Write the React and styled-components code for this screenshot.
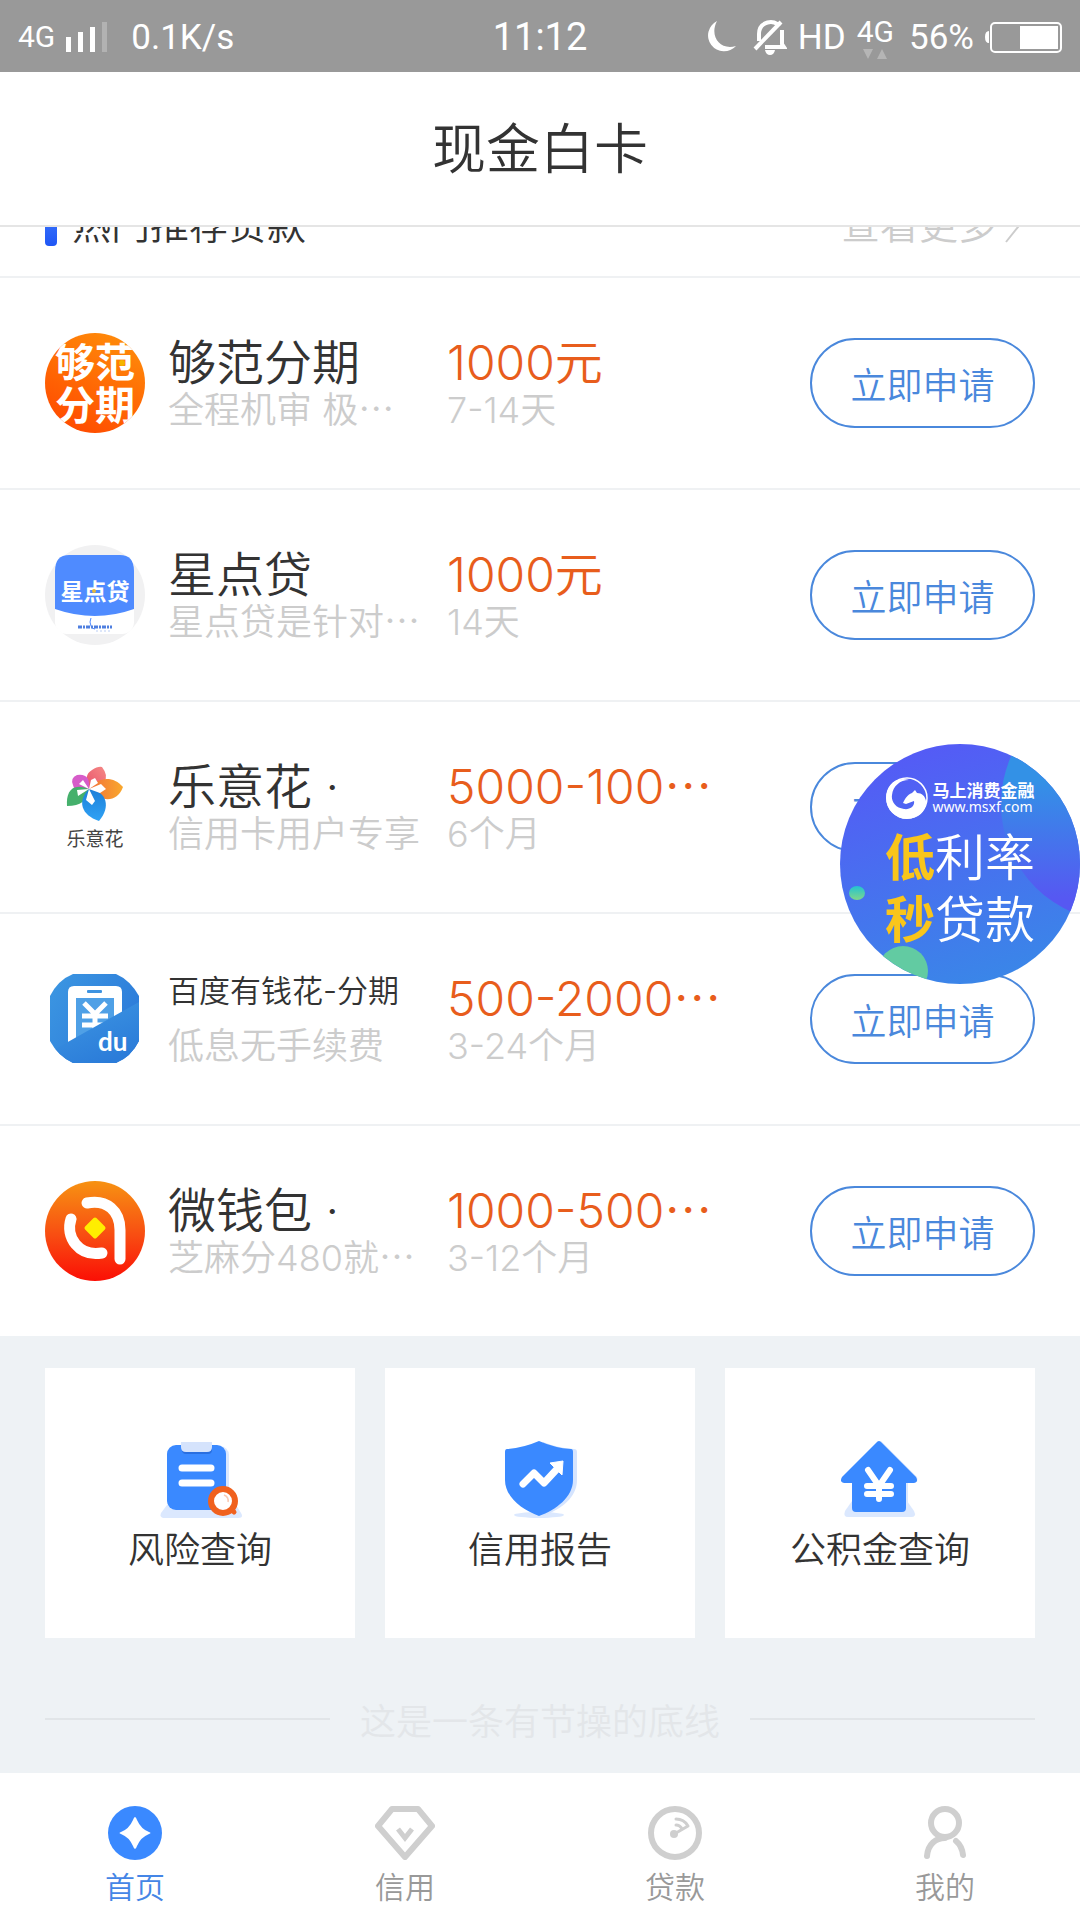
import React from "react";
import styled, { createGlobalStyle } from "styled-components";

const GlobalStyle = createGlobalStyle`
  *, *::before, *::after { box-sizing: border-box; }
  body {
    margin: 0;
    background: #eef2f5;
    color: #333;
    font-family: Inter, "Noto Sans CJK SC", sans-serif;
    font-weight: 350;
  }
  h1, h2, h3, p, ul { margin: 0; padding: 0; font-weight: inherit; }
  a { color: inherit; text-decoration: none; }
  svg { display: block; flex: none; }
`;

const Page = styled.div`
  position: relative;
  display: flex;
  flex-direction: column;
  height: 100vh;
  overflow: hidden;
`;

const StatusBar = styled.div`
  flex: none;
  display: grid;
  grid-template-columns: 1fr auto 1fr;
  align-items: center;
  height: 72px;
  padding: 2px 18px 0;
  background: #999;
  color: #fff;
  font-family: Roboto, sans-serif;
  font-weight: 400;
  font-size: 35px;
`;

const StatusGroup = styled.div`
  display: flex;
  align-items: center;
  justify-content: ${(p) => p.$justify || "flex-start"};
  gap: ${(p) => p.$gap}px;
`;

const Network = styled.span`
  font-size: 30px;
  line-height: 34px;
`;

const NetworkStack = styled.div`
  display: flex;
  flex-direction: column;
  align-items: center;
  padding-right: 4px;
`;

const Speed = styled.span`
  padding-left: 12px;
`;

const Clock = styled.time`
  font-size: 38px;
`;

const TitleBar = styled.header`
  flex: none;
  display: flex;
  align-items: center;
  justify-content: center;
  height: 155px;
  padding-top: 2px;
  border-bottom: 2px solid #e5e5e5;
  background: #fff;
`;

const Title = styled.h1`
  font-size: 54px;
  line-height: 80px;
`;

const Content = styled.main`
  flex: 1;
  min-height: 0;
  display: flex;
  flex-direction: column;
  justify-content: flex-end;
  overflow: hidden;
`;

const Section = styled.section`
  flex: none;
  background: #fff;
`;

const SectionHead = styled.div`
  display: flex;
  align-items: center;
  gap: 15px;
  height: 108px;
  padding: 0 57px 0 45px;
  font-size: 39px;
`;

const Marker = styled.span`
  width: 12px;
  height: 48px;
  border-radius: 4px;
  background: linear-gradient(#4a86ff, #1f56f5);
`;

const SectionTitle = styled.h2`
  flex: 1;
  font-size: 39px;
`;

const MoreLink = styled.a`
  display: flex;
  align-items: center;
  gap: 8px;
  color: #ccc;
`;

const LoanList = styled.ul`
  list-style: none;
`;

const LoanRow = styled.li`
  display: flex;
  align-items: center;
  height: 212px;
  padding: 0 45px;
  border-top: 2px solid #eff1f3;
`;

const Info = styled.div`
  flex: none;
  width: ${(p) => p.$width}px;
  margin-left: ${(p) => p.$gap}px;
  white-space: nowrap;
`;

const Name = styled.h3`
  height: 54px;
  font-size: ${(p) => (p.$long ? 31 : 48)}px;
  line-height: ${(p) => (p.$long ? 38 : 54)}px;
`;

const Amount = styled.p`
  font-size: 48px;
  line-height: 54px;
  color: #e85d1c;
`;

const Note = styled.p`
  font-size: 36px;
  line-height: 40px;
  color: #ccc;
`;

const ApplyButton = styled.button`
  width: 225px;
  height: 90px;
  margin-left: auto;
  padding: 0;
  border: 2px solid #4a88dc;
  border-radius: 45px;
  background: #fff;
  color: #4a88dc;
  font: inherit;
  font-size: 36px;
`;

const Tools = styled.section`
  flex: none;
  display: grid;
  grid-template-columns: repeat(3, 1fr);
  gap: 30px;
  padding: 32px 45px 0;
`;

const ToolCard = styled.a`
  display: flex;
  flex-direction: column;
  align-items: center;
  justify-content: center;
  gap: 6px;
  height: 270px;
  padding-top: 4px;
  background: #fff;
  font-size: 36px;
  line-height: 50px;
`;

const EndLine = styled.p`
  flex: none;
  display: flex;
  align-items: center;
  gap: 30px;
  height: 135px;
  padding: 26px 45px 0;
  color: #e3e6e9;
  font-size: 36px;
  &::before, &::after {
    content: "";
    flex: 1;
    height: 2px;
    background: #e1e5e8;
  }
`;

const TabBar = styled.nav`
  flex: none;
  display: grid;
  grid-template-columns: repeat(4, 1fr);
  height: 147px;
  padding-top: 33px;
  background: #fff;
`;

const Tab = styled.a`
  display: flex;
  flex-direction: column;
  align-items: center;
  gap: 9px;
  color: ${(p) => (p.$active ? "#4586e6" : "#999")};
  font-size: 30px;
  line-height: 36px;
`;

const Promo = styled.a`
  position: absolute;
  top: 744px;
  right: 0;
  width: 240px;
  height: 240px;
  border-radius: 50%;
  overflow: hidden;
  color: #fff;
`;

const PromoArt = styled.svg`
  position: absolute;
  inset: 0;
`;

const PromoBody = styled.div`
  position: relative;
  display: flex;
  flex-direction: column;
  align-items: center;
  padding-top: 33px;
`;

const Brand = styled.div`
  display: flex;
  align-items: center;
  gap: 5px;
  height: 42px;
  margin-bottom: 8px;
`;

const BrandName = styled.div`
  font-size: 17px;
  font-weight: 700;
  line-height: 18px;
`;

const BrandSite = styled.div`
  font-family: "Noto Sans", sans-serif;
  font-size: 14px;
  font-weight: 400;
  line-height: 14px;
`;

const Slogan = styled.div`
  font-size: 50px;
  line-height: 62px;
  strong { color: #f9c51b; font-weight: 700; }
`;

const cjk = '"Noto Sans CJK SC", sans-serif';

function GoufanLogo() {
  return (
    <svg width="100" height="100" viewBox="0 0 100 100">
      <defs>
        <linearGradient id="goufan" x1="0.8" y1="0" x2="0.3" y2="1">
          <stop offset="0" stopColor="#ff8d0a" />
          <stop offset="1" stopColor="#ff4b00" />
        </linearGradient>
        <clipPath id="goufanClip"><circle cx="50" cy="50" r="50" /></clipPath>
      </defs>
      <circle cx="50" cy="50" r="50" fill="url(#goufan)" />
      <g clipPath="url(#goufanClip)" fill="#fff" fontFamily={cjk} fontWeight="700" fontSize="40" textAnchor="middle">
        <text x="50" y="44">够范</text>
        <text x="50" y="87">分期</text>
      </g>
      <circle cx="77" cy="30" r="3" fill="#f5b400" />
    </svg>
  );
}

function XingdianLogo() {
  return (
    <svg width="100" height="100" viewBox="0 0 100 100">
      <circle cx="50" cy="50" r="50" fill="#f1f1f2" />
      <rect x="10" y="10" width="79" height="79" rx="12" fill="#fff" />
      <path d="M10 64V26Q10 10 24 10H75Q89 10 89 26V64Q50 78 10 64Z" fill="#4f8bff" />
      <text x="50" y="55" fill="#fff" fontFamily={cjk} fontWeight="700" fontSize="23" textAnchor="middle">星点贷</text>
      <circle cx="49" cy="46" r="2" fill="#e5b93c" />
      <path d="M46 73q-2 4 0 8q1 3 4 3" fill="none" stroke="#4f8bff" strokeWidth="1" />
      <path d="M33 82h34" stroke="#4f7fe0" strokeWidth="3" strokeDasharray="4 1 2 1" />
      <path d="M51 86h14" stroke="#b9cdf5" strokeWidth="1" strokeDasharray="2 2" />
    </svg>
  );
}

function LeyihuaLogo() {
  return (
    <svg width="100" height="100" viewBox="0 0 100 100">
      <defs>
        <linearGradient id="petalRed" x1="0" y1="1" x2="1" y2="0"><stop offset="0" stopColor="#e9516b" /><stop offset="1" stopColor="#f58a86" /></linearGradient>
        <linearGradient id="petalOrange" x1="0" y1="0" x2="1" y2="0"><stop offset="0" stopColor="#f2703a" /><stop offset="1" stopColor="#f9a82c" /></linearGradient>
        <linearGradient id="petalBlue" x1="0" y1="0" x2="0" y2="1"><stop offset="0" stopColor="#1d7fd8" /><stop offset="1" stopColor="#2fa2f5" /></linearGradient>
      </defs>
      <path d="M44 32Q38 18 47 13Q53 9 57 10Q64 19 59 25Q54 30 44 32Z" fill="url(#petalRed)" />
      <path d="M44 32C52 20 68 18 78 30C72 46 56 46 44 32Z" fill="url(#petalOrange)" />
      <path d="M44 32Q30 38 28 28Q25 21 32 18Q46 16 44 32Z" fill="#d65cc9" />
      <path d="M44 32C26 25 21 36 22 49C36 49 42 44 44 32Z" fill="#45b06c" />
      <path d="M44 32C32 44 36 58 54 64C66 50 62 34 44 32Z" fill="url(#petalBlue)" />
      <path d="M44 32L46 23L50 21L53 26ZM44 32L56 27L61 32L55 36ZM44 32L50 44L47 48L41 43ZM44 32L33 39L32 33ZM44 32L34 27L38 23Z" fill="#fff" />
      <text x="50" y="89" fill="#444" fontFamily={cjk} fontWeight="400" fontSize="19" textAnchor="middle">乐意花</text>
    </svg>
  );
}

function DuLogo() {
  return (
    <svg width="100" height="100" viewBox="0 0 100 100">
      <defs>
        <linearGradient id="duTop" x1="0" y1="0" x2="1" y2="0.6"><stop offset="0" stopColor="#3c97e2" /><stop offset="1" stopColor="#2c7ad9" /></linearGradient>
        <linearGradient id="duBottom" x1="0" y1="0" x2="0.6" y2="1"><stop offset="0" stopColor="#3f98e3" /><stop offset="1" stopColor="#2b7cd9" /></linearGradient>
        <clipPath id="duClip"><path d="M28 5H71Q85 11 94 27V72Q86 88 71 94H28Q13 87 5 72V27Q13 11 28 5Z" /></clipPath>
      </defs>
      <g clipPath="url(#duClip)">
        <rect x="5" y="5" width="89" height="89" fill="url(#duTop)" />
        <path d="M23 90V23Q23 17 29 17H71Q77 17 77 23V70Z" fill="#fff" />
        <rect x="42" y="21" width="15" height="3" rx="1" fill="#3e93e0" />
        <rect x="31" y="29" width="38" height="60" fill="#4fa0e6" />
        <path d="M39 34L50 45L61 34M50 44V62M37 47H63M37 56H63" fill="none" stroke="#fff" strokeWidth="5" />
        <path d="M5 83L94 33V95H5Z" fill="url(#duBottom)" />
      </g>
      <text x="53" y="82" fill="#fff" fontFamily="Lato, sans-serif" fontWeight="700" fontSize="26">du</text>
    </svg>
  );
}

function WeiqianbaoLogo() {
  return (
    <svg width="100" height="100" viewBox="0 0 100 100">
      <defs>
        <linearGradient id="wallet" x1="0" y1="0" x2="0" y2="1"><stop offset="0" stopColor="#f79212" /><stop offset="0.55" stopColor="#f84c12" /><stop offset="1" stopColor="#fb0f05" /></linearGradient>
      </defs>
      <circle cx="50" cy="50" r="50" fill="url(#wallet)" />
      <g fill="none" stroke="#fff" strokeWidth="11" strokeLinecap="round" strokeLinejoin="round">
        <path d="M42 22C62 18 75 30 75 49V78" />
        <path d="M26 38C20 56 34 76 57 72" />
      </g>
      <rect x="42" y="39" width="16" height="16" rx="2" fill="#ffee00" transform="rotate(45 50 47)" />
    </svg>
  );
}

function RiskIcon() {
  return (
    <svg width="84" height="84" viewBox="0 0 84 84">
      <path d="M9 70L3 78Q1 83 7 83H80Q86 83 83 78L78 70Z" fill="#dbe8fe" />
      <rect x="12" y="11" width="59" height="64" rx="9" fill="#dbe8fe" />
      <rect x="9" y="10" width="59" height="65" rx="9" fill="#3a89ff" />
      <path d="M24 11H54V15Q54 19 50 19H28Q24 19 24 15Z" fill="#2a6fe0" />
      <path d="M23 7H54V12Q54 17 49 17H28Q23 17 23 12Z" fill="#d5e3fc" />
      <path d="M24 33H53M24 48H53" stroke="#fff" strokeWidth="7" strokeLinecap="round" />
      <path d="M71 71L76 77" stroke="#f0611e" strokeWidth="5" strokeLinecap="round" />
      <circle cx="65" cy="66" r="12" fill="#fff" stroke="#f0611e" strokeWidth="6" />
      <path d="M66 60Q71 62 70 67" fill="none" stroke="#f9c9b2" strokeWidth="1.5" />
    </svg>
  );
}

function ReportIcon() {
  return (
    <svg width="84" height="84" viewBox="0 0 84 84">
      <ellipse cx="41" cy="80" rx="25" ry="3" fill="#dbe8fe" />
      <path d="M45 7Q60 13 76 14Q79 14 79 17V45C79 62 64 74 45 81Z" fill="#d5e4fe" />
      <path d="M41 6Q57 13 73 14Q75 14 75 17V45C75 62 58 75 41 81C24 75 7 62 7 45V17Q7 14 9 14Q25 13 41 6Z" fill="#3a89ff" />
      <path d="M25 49L36 38L46 48L59 34" fill="none" stroke="#fff" strokeWidth="7" strokeLinecap="round" strokeLinejoin="round" />
      <path d="M52 28L65 26L64 40Z" fill="#fff" stroke="#fff" strokeLinejoin="round" />
    </svg>
  );
}

function FundIcon() {
  return (
    <svg width="84" height="84" viewBox="0 0 84 84">
      <path d="M14 66L7 76Q5 82 10 82H73Q79 82 76 76L69 66Z" fill="#dbe8fe" />
      <path d="M43 6L79 42Q81 47 76 48H70V75H20Z" fill="#dbe8fe" />
      <path d="M38 8Q41 4 44 8L78 42Q81 47 76 48H68V73Q68 77 64 77H18Q14 77 14 73V48H6Q1 47 4 42Z" fill="#3a89ff" />
      <path d="M30 35L41 51L52 35M41 51V64M29 51H53M29 59H53" fill="none" stroke="#fff" strokeWidth="6" strokeLinecap="round" strokeLinejoin="round" />
    </svg>
  );
}

function HomeIcon() {
  return (
    <svg width="54" height="54" viewBox="0 0 54 54">
      <circle cx="27" cy="27" r="27" fill="#3a89ff" />
      <path d="M27 11Q28 11 29 14Q33 23 41 26Q44 27 41 28Q33 31 29 40Q28 43 27 43Q26 43 25 40Q21 31 13 28Q10 27 13 26Q21 23 25 14Q26 11 27 11Z" fill="#fff" />
    </svg>
  );
}

function CreditIcon() {
  return (
    <svg width="60" height="54" viewBox="0 0 60 54" fill="none" stroke="#cfcfcf" strokeLinejoin="round">
      <path d="M17 3H43L57 20L30 51L3 20Z" strokeWidth="6" />
      <path d="M23 23L30 32L37 23" strokeWidth="5" strokeLinejoin="miter" />
    </svg>
  );
}

function LoanIcon() {
  return (
    <svg width="54" height="54" viewBox="0 0 54 54" fill="none" stroke="#cfcfcf" strokeLinecap="round" strokeLinejoin="round">
      <circle cx="27" cy="27" r="24" strokeWidth="6" />
      <path d="M28 13Q36 13 40 20L28 27M28 19Q32 19 34 23" strokeWidth="3" />
      <circle cx="26" cy="28" r="4" fill="#cfcfcf" stroke="none" />
    </svg>
  );
}

function MineIcon() {
  return (
    <svg width="54" height="54" viewBox="0 0 54 54" fill="none" stroke="#cfcfcf" strokeWidth="6" strokeLinecap="round">
      <ellipse cx="27" cy="17" rx="14" ry="14" />
      <path d="M9 50C10 38 18 32 27 32M38 35Q44 40 45 49" />
    </svg>
  );
}

function SignalIcon() {
  return (
    <svg width="42" height="32" viewBox="0 0 42 32" fill="#fff">
      <rect x="0" y="16" width="5" height="15" />
      <rect x="12" y="11" width="5" height="20" />
      <rect x="24" y="6" width="5" height="25" />
      <rect x="36" y="1" width="5" height="30" opacity="0.25" />
    </svg>
  );
}

function MoonIcon() {
  return (
    <svg width="36" height="32" viewBox="0 0 36 32" fill="#fff">
      <path d="M11 0A16 16 0 1 0 30 25C14 30 3 15 11 0Z" />
    </svg>
  );
}

function MuteIcon() {
  return (
    <svg width="34" height="35" viewBox="0 0 34 35" fill="none" stroke="#fff" strokeWidth="4">
      <path d="M6 21V14C6 1 22 -1 26 6M29 10V24L31 27H12" />
      <path d="M2 29L28 2" />
      <path d="M12 30H22Q21 35 17 35Q13 35 12 30Z" fill="#fff" stroke="none" />
    </svg>
  );
}

function ArrowsIcon() {
  return (
    <svg width="24" height="10" viewBox="0 0 24 10" fill="#b5b5b5">
      <path d="M0 0H10L5 10Z" />
      <path d="M14 10H24L19 0Z" />
    </svg>
  );
}

function BatteryIcon() {
  return (
    <svg width="77" height="31" viewBox="0 0 77 31">
      <path d="M4 9Q0 9 0 15Q0 21 4 21Z" fill="#fff" />
      <rect x="6" y="1" width="70" height="29" rx="4" fill="none" stroke="#fff" strokeWidth="2" />
      <rect x="35" y="4" width="38" height="23" fill="#fff" />
    </svg>
  );
}

function HorseIcon() {
  return (
    <svg width="42" height="42" viewBox="0 0 42 42">
      <circle cx="21" cy="21" r="20" fill="none" stroke="#fff" strokeWidth="1.5" />
      <path d="M23 3C9 -1 0 9 0 21A21 21 0 0 0 21 42C33 42 41 33 40 24C39 19 36 16 31 16L29 13L26 16C21 18 19 22 17 26L20 27L28 24C29 29 24 33 18 32C9 31 5 24 6 18C7 9 14 3 23 3Z" fill="#fff" />
    </svg>
  );
}

const loans = [
  { name: "够范分期", note: "全程机审 极⋯", amount: "1000元", term: "7-14天", Logo: GoufanLogo },
  { name: "星点贷", note: "星点贷是针对⋯", amount: "1000元", term: "14天", Logo: XingdianLogo },
  { name: "乐意花 ·", note: "信用卡用户专享", amount: "5000-100⋯", term: "6个月", Logo: LeyihuaLogo },
  { name: "百度有钱花-分期", long: true, note: "低息无手续费", amount: "500-2000⋯", term: "3-24个月", Logo: DuLogo },
  { name: "微钱包 ·", note: "芝麻分480就⋯", amount: "1000-500⋯", term: "3-12个月", Logo: WeiqianbaoLogo },
];

const tools = [
  { label: "风险查询", Icon: RiskIcon },
  { label: "信用报告", Icon: ReportIcon },
  { label: "公积金查询", Icon: FundIcon },
];

const tabs = [
  { label: "首页", Icon: HomeIcon, active: true },
  { label: "信用", Icon: CreditIcon },
  { label: "贷款", Icon: LoanIcon },
  { label: "我的", Icon: MineIcon },
];

function PromoBadge() {
  return (
    <Promo href="#promo">
      <PromoArt width="240" height="240" viewBox="0 0 240 240">
        <defs>
          <linearGradient id="promoBg" x1="0.3" y1="0" x2="0.6" y2="1"><stop offset="0" stopColor="#555af6" /><stop offset="1" stopColor="#3a86e8" /></linearGradient>
          <linearGradient id="promoBlob" x1="0" y1="0" x2="0" y2="1"><stop offset="0.4" stopColor="#3391e6" /><stop offset="0.9" stopColor="#5658f2" /></linearGradient>
          <linearGradient id="promoDot" x1="0" y1="0" x2="0" y2="1"><stop offset="0" stopColor="#22c3d2" /><stop offset="1" stopColor="#7fd68b" /></linearGradient>
        </defs>
        <rect width="240" height="240" fill="url(#promoBg)" />
        <circle cx="279" cy="60" r="118" fill="url(#promoBlob)" />
        <ellipse cx="17" cy="149" rx="8" ry="7" fill="url(#promoDot)" />
        <circle cx="63" cy="227" r="25" fill="#62cba2" />
      </PromoArt>
      <PromoBody>
        <Brand>
          <HorseIcon />
          <div>
            <BrandName>马上消费金融</BrandName>
            <BrandSite>www.msxf.com</BrandSite>
          </div>
        </Brand>
        <Slogan><strong>低</strong>利率</Slogan>
        <Slogan><strong>秒</strong>贷款</Slogan>
      </PromoBody>
    </Promo>
  );
}

export default function App() {
  return (
    <Page lang="zh-CN">
      <GlobalStyle />
      <StatusBar>
        <StatusGroup $gap={11}>
          <Network>4G</Network>
          <SignalIcon />
          <Speed>0.1K/s</Speed>
        </StatusGroup>
        <Clock>11:12</Clock>
        <StatusGroup $gap={11} $justify="flex-end">
          <MoonIcon />
          <MuteIcon />
          <span>HD</span>
          <NetworkStack>
            <Network>4G</Network>
            <ArrowsIcon />
          </NetworkStack>
          <span>56%</span>
          <BatteryIcon />
        </StatusGroup>
      </StatusBar>
      <TitleBar>
        <Title>现金白卡</Title>
      </TitleBar>
      <Content>
        <Section>
          <SectionHead>
            <Marker />
            <SectionTitle>热门推荐贷款</SectionTitle>
            <MoreLink href="#more">
              查看更多
              <svg width="18" height="42" viewBox="0 0 18 42" fill="none" stroke="#ccc" strokeWidth="2">
                <path d="M1 1L17 21L1 41" />
              </svg>
            </MoreLink>
          </SectionHead>
          <LoanList>
            {loans.map(({ name, long, note, amount, term, Logo }) => (
              <LoanRow key={name}>
                <Logo />
                <Info $width={256} $gap={23}>
                  <Name $long={long}>{name}</Name>
                  <Note>{note}</Note>
                </Info>
                <Info $width={290} $gap={23}>
                  <Amount>{amount}</Amount>
                  <Note>{term}</Note>
                </Info>
                <ApplyButton type="button">立即申请</ApplyButton>
              </LoanRow>
            ))}
          </LoanList>
        </Section>
        <Tools>
          {tools.map(({ label, Icon }) => (
            <ToolCard key={label} href="#tool">
              <Icon />
              {label}
            </ToolCard>
          ))}
        </Tools>
        <EndLine>这是一条有节操的底线</EndLine>
      </Content>
      <TabBar>
        {tabs.map(({ label, Icon, active }) => (
          <Tab key={label} href="#tab" $active={active}>
            <Icon />
            {label}
          </Tab>
        ))}
      </TabBar>
      <PromoBadge />
    </Page>
  );
}
